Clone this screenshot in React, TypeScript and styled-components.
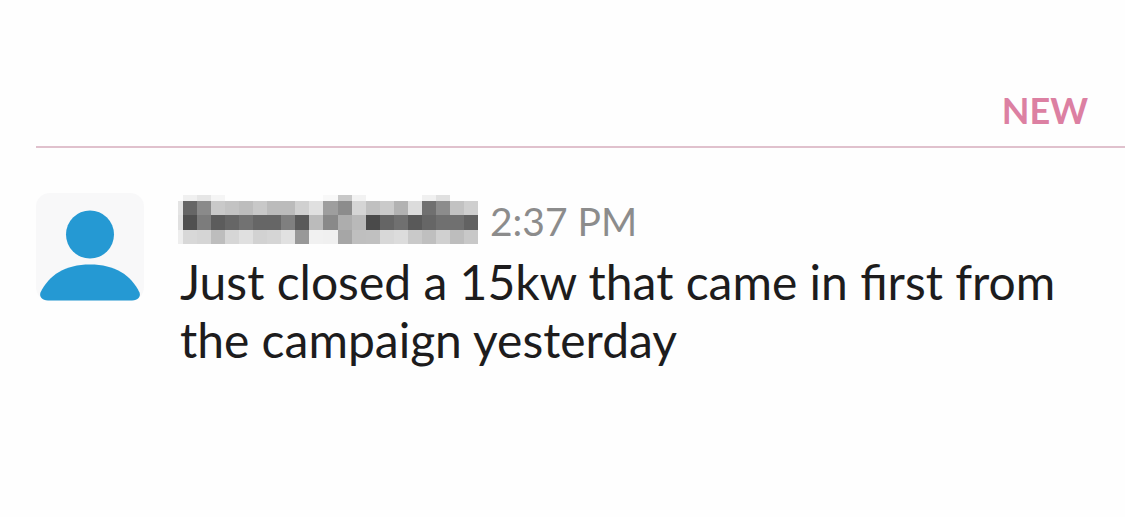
import React from "react";
import styled, { createGlobalStyle } from "styled-components";

const GlobalStyle = createGlobalStyle`
  * { box-sizing: border-box; }
  body {
    margin: 0;
    background: #fefefe;
    color: #1d1c1d;
    font-family: Lato, "Liberation Sans", sans-serif;
  }
`;

const Channel = styled.main`
  padding: 88px 0 32px 36px;
`;

const UnreadDivider = styled.div`
  display: flex;
  justify-content: flex-end;
  padding: 0 37px 14px 0;
  border-bottom: 2px solid #e0c1cd;
`;

const UnreadLabel = styled.span`
  color: #dc80a2;
  font-size: 36px;
  font-weight: 700;
  line-height: 44px;
`;

const Message = styled.article`
  display: flex;
  align-items: flex-start;
  gap: 34px;
  padding: 45px 64px 0 0;
`;

const Avatar = styled.svg`
  flex: none;
  width: 108px;
  height: 108px;
`;

const Content = styled.div`
  flex: 1;
  min-width: 0;
  padding-top: 2px;
`;

const Meta = styled.header`
  display: flex;
  align-items: center;
  gap: 12px;
  height: 49px;
`;

const HiddenName = styled.svg`
  flex: none;
  width: 300px;
  height: 49px;
`;

const Time = styled.time`
  padding-top: 2px;
  color: #8c8c8c;
  font-size: 39px;
  line-height: 48px;
`;

const Body = styled.p`
  margin: 9px 0 0;
  padding-left: 2px;
  font-size: 48px;
  line-height: 58px;
`;

const rowTops = [0, 6, 20, 35, 49];
const columnLefts = Array.from({ length: 23 }, (_, i) =>
  i === 0 ? 0 : 5 + (i - 1) * 14 + (i > 11 ? 1 : 0)
);

/* Grey level of every block that covers the sender's name, in hex. */
const blocks = [
  "fe f0 e6 f5 fe fe fe fe fe fe fe f8 c8 f2 fe fe fe fe f0 e0 fe fe",
  "e4 66 8a c9 c3 bd c8 bb bb d0 e0 9e 8c d5 c0 ca b2 dc 70 8c c2 cf",
  "e0 50 7c 5c 66 72 66 66 7f 5a bb 89 ad b9 4a 65 70 59 66 70 70 62",
  "ee d8 d5 bd d6 e0 d2 d5 e1 98 f1 f0 a6 bf c0 d8 dc c9 bf d0 bd c8",
].map((row) => row.split(" "));

function PixelatedName() {
  return (
    <HiddenName viewBox="0 0 300 49" role="img" aria-label="Hidden name" shapeRendering="crispEdges">
      {blocks.map((row, r) =>
        row.map((level, c) => (
          <rect
            key={`${r}-${c}`}
            x={columnLefts[c]}
            y={rowTops[r]}
            width={columnLefts[c + 1] - columnLefts[c]}
            height={rowTops[r + 1] - rowTops[r]}
            fill={`#${level}${level}${level}`}
          />
        ))
      )}
    </HiddenName>
  );
}

function PersonAvatar() {
  return (
    <Avatar viewBox="0 0 108 108" aria-hidden="true">
      <rect width="108" height="108" rx="14" fill="#f8f8f9" />
      <circle cx="54" cy="41.5" r="24" fill="#2599d3" />
      <path
        d="M54 71.5C79 71.5 95 82 103.500 99.500C105 103.500 102 107.500 96 107.500H12C6 107.500 3 103.500 4.500 99.500C13 82 29 71.500 54 71.500Z"
        fill="#2599d3"
      />
    </Avatar>
  );
}

export default function App() {
  return (
    <>
      <GlobalStyle />
      <Channel>
        <UnreadDivider>
          <UnreadLabel>NEW</UnreadLabel>
        </UnreadDivider>
        <Message>
          <PersonAvatar />
          <Content>
            <Meta>
              <PixelatedName />
              <Time dateTime="14:37">2:37 PM</Time>
            </Meta>
            <Body>Just closed a 15kw that came in first from the campaign yesterday</Body>
          </Content>
        </Message>
      </Channel>
    </>
  );
}
